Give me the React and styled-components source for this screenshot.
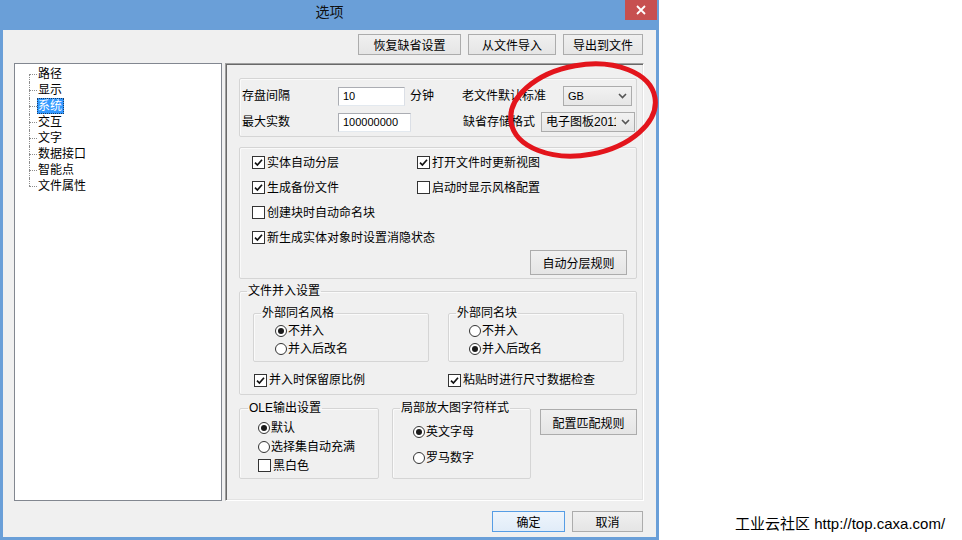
import React from 'react';
import styled, { createGlobalStyle } from 'styled-components';

const font = `"Liberation Sans", "Noto Sans CJK SC", sans-serif`;

const GlobalStyle = createGlobalStyle`
  html, body { margin: 0; padding: 0; background: #fff; }
  body { font-family: ${font}; font-size: 12px; color: #000; }
`;

const Page = styled.div`
  position: relative;
  width: 962px;
  height: 540px;
  display: flex;
  align-items: flex-end;
  overflow: hidden;
`;

const Window = styled.div`
  width: 659px;
  height: 540px;
  box-sizing: border-box;
  background: #6a9fd8;
  padding: 0 3px 3px 3px;
  display: flex;
  flex-direction: column;
  flex-shrink: 0;
`;

const TitleBar = styled.div`
  height: 30px;
  margin: 0 -3px;
  display: grid;
  grid-template-columns: 1fr auto 1fr;
  align-items: start;
`;

const Title = styled.div`
  grid-column: 2;
  font-size: 14px;
  line-height: 16px;
  padding-top: 4px;
  color: #111;
`;

const CloseBtn = styled.div`
  grid-column: 3;
  justify-self: end;
  width: 32px;
  height: 20px;
  margin-right: 2px;
  background: #c75050;
  display: flex;
  align-items: center;
  justify-content: center;
`;

const Client = styled.div`
  flex: 1;
  background: #f0f0f0;
  display: flex;
  flex-direction: column;
`;

const TopBar = styled.div`
  height: 33px;
  box-sizing: border-box;
  padding: 4px 13px 0 0;
  display: flex;
  justify-content: flex-end;
  gap: 7px;
`;

const Button = styled.button`
  width: ${p => p.w}px;
  height: ${p => p.h || 21}px;
  box-sizing: border-box;
  padding: 0;
  margin: ${p => p.m || 0};
  border: 1px solid ${p => (p.primary ? '#569de5' : '#acacac')};
  background: ${p => (p.primary ? 'linear-gradient(#eef5fc, #e1ecf8)' : 'linear-gradient(#f0f0f0, #e5e5e5)')};
  font: 12px ${font};
  color: #000;
  flex-shrink: 0;
`;

const Main = styled.div`
  height: 438px;
  display: flex;
  padding-left: 11px;
  gap: 3px;
`;

const Tree = styled.div`
  width: 208px;
  box-sizing: border-box;
  border: 1px solid #828790;
  background: #fff;
  padding: 2px 0 0 14px;
`;

const TreeItem = styled.div`
  position: relative;
  height: 16px;
  line-height: 16px;
  padding-left: 8px;
  &::before {
    content: '';
    position: absolute;
    left: 0;
    top: 8px;
    width: 8px;
    border-top: 1px dotted #8c8c8c;
  }
  &::after {
    content: '';
    position: absolute;
    left: 0;
    top: ${p => (p.first ? 8 : 0)}px;
    height: ${p => (p.first || p.last ? 8 : 16)}px;
    border-left: 1px dotted #8c8c8c;
  }
`;

const TreeLabel = styled.span`
  display: inline-block;
  padding: 0 2px 0 1px;
  height: 16px;
  box-sizing: border-box;
  background: ${p => (p.selected ? '#3399ff' : 'transparent')};
  color: ${p => (p.selected ? '#fff' : '#000')};
  outline: ${p => (p.selected ? '1px dotted #1a3d66' : 'none')};
  outline-offset: -1px;
`;

const Panel = styled.div`
  width: 419px;
  box-sizing: border-box;
  border-top: 1px solid #a0a0a0;
  border-left: 1px solid #a0a0a0;
  border-right: 1px solid #fff;
  border-bottom: 1px solid #fff;
  box-shadow: inset 1px 1px 0 #696969, inset -1px -1px 0 #e3e3e3;
  padding: 14px 5px 0 13px;
`;

const Group = styled.fieldset`
  margin: ${p => p.m || 0};
  padding: ${p => p.pad || 0};
  width: ${p => p.w}px;
  box-sizing: border-box;
  min-width: 0;
  border: 1px solid #d5d5d5;
  border-radius: 2px;
  box-shadow: inset 1px 1px 0 #fafafa;
`;

const Legend = styled.legend`
  padding: 0 1px;
  font-size: 12px;
  line-height: 16px;
`;

const FieldRow = styled.div`
  display: flex;
  align-items: center;
  height: 20px;
  margin-top: ${p => p.mt || 0}px;
`;

const Cell = styled.span`
  width: ${p => p.w}px;
  flex-shrink: 0;
  padding-left: ${p => p.pl || 0}px;
  box-sizing: border-box;
  line-height: 16px;
  white-space: nowrap;
`;

const Input = styled.div`
  width: ${p => p.w}px;
  height: 19px;
  flex-shrink: 0;
  box-sizing: border-box;
  border: 1px solid #abadb3;
  border-right-color: #dbdfe6;
  border-bottom-color: #e3e9ef;
  background: #fff;
  padding-left: 4px;
  font: 11px ${font};
  line-height: 17px;
`;

const Select = styled.div`
  width: ${p => p.w}px;
  height: 20px;
  flex-shrink: 0;
  box-sizing: border-box;
  border: 1px solid #acacac;
  background: linear-gradient(#f2f2f2, #e6e6e6);
  display: flex;
  align-items: center;
  padding: 0 4px 0 4px;
`;

const SelectValue = styled.span`
  flex: 1;
  overflow: hidden;
  white-space: nowrap;
  font-size: ${p => (p.small ? 11 : 12)}px;
  line-height: 16px;
`;

const ArrowBox = styled.span`
  width: 14px;
  display: flex;
  justify-content: flex-end;
  flex-shrink: 0;
`;

const CheckGrid = styled.div`
  display: grid;
  grid-template-columns: ${p => p.cols};
  grid-auto-rows: ${p => p.rh}px;
  align-items: center;
  margin: ${p => p.m || 0};
`;

const OptionLine = styled.label`
  display: flex;
  align-items: center;
  white-space: nowrap;
  line-height: 16px;
`;

const Box = styled.span`
  width: 13px;
  height: 13px;
  box-sizing: border-box;
  border: 1px solid #333;
  background: #fff;
  display: inline-flex;
  align-items: center;
  justify-content: center;
  margin-right: 2px;
  flex-shrink: 0;
`;

const Ring = styled.span`
  width: 12px;
  height: 12px;
  box-sizing: border-box;
  border: 1px solid #333;
  border-radius: 50%;
  background: #fff;
  display: inline-flex;
  align-items: center;
  justify-content: center;
  margin-right: 1px;
  flex-shrink: 0;
  &::after {
    content: '';
    width: 6px;
    height: 6px;
    border-radius: 50%;
    background: ${p => (p.on ? '#1a1a1a' : 'transparent')};
  }
`;

const ButtonRow = styled.div`
  display: flex;
  justify-content: flex-end;
  padding-right: 9px;
`;

const SubRow = styled.div`
  display: flex;
  gap: ${p => p.gap || 0}px;
  margin: ${p => p.m || 0};
`;

const LowerRow = styled.div`
  display: flex;
  align-items: stretch;
  margin-top: 5px;
`;

const BottomBar = styled.div`
  height: 36px;
  box-sizing: border-box;
  padding: 10px 13px 0 0;
  display: flex;
  justify-content: flex-end;
  gap: 7px;
`;

const Footer = styled.div`
  margin: 0 0 7px 76px;
  font-size: 15px;
  line-height: 18px;
  white-space: nowrap;
`;

const Mark = styled.svg`
  position: absolute;
  left: 0;
  top: 0;
  pointer-events: none;
`;

const Check = ({ on, children }) => (
  <OptionLine>
    <Box>
      {on && (
        <svg width="9" height="9" viewBox="0 0 9 9">
          <path d="M1 4.6 L3.4 7 L8 1.8" fill="none" stroke="#111" strokeWidth="1.7" />
        </svg>
      )}
    </Box>
    {children}
  </OptionLine>
);

const Radio = ({ on, children }) => (
  <OptionLine>
    <Ring on={on} />
    {children}
  </OptionLine>
);

const Arrow = () => (
  <ArrowBox>
    <svg width="9" height="6" viewBox="0 0 9 6">
      <path d="M1 1 L4.5 4.5 L8 1" fill="none" stroke="#555" strokeWidth="1.6" />
    </svg>
  </ArrowBox>
);

const treeItems = ['路径', '显示', '系统', '交互', '文字', '数据接口', '智能点', '文件属性'];

export default function App() {
  return (
    <Page>
      <GlobalStyle />
      <Window>
        <TitleBar>
          <Title>选项</Title>
          <CloseBtn>
            <svg width="10" height="10" viewBox="0 0 10 10">
              <path d="M1 1 L9 9 M9 1 L1 9" stroke="#fff" strokeWidth="1.8" />
            </svg>
          </CloseBtn>
        </TitleBar>
        <Client>
          <TopBar>
            <Button w={103}>恢复缺省设置</Button>
            <Button w={88}>从文件导入</Button>
            <Button w={80}>导出到文件</Button>
          </TopBar>
          <Main>
            <Tree>
              {treeItems.map((t, i) => (
                <TreeItem key={t} first={i === 0} last={i === treeItems.length - 1}>
                  <TreeLabel selected={t === '系统'}>{t}</TreeLabel>
                </TreeItem>
              ))}
            </Tree>
            <Panel>
              <Group w={398} pad="7px 0 4px 2px">
                <FieldRow>
                  <Cell w={96}>存盘间隔</Cell>
                  <Input w={67}>10</Input>
                  <Cell w={57} pl={5}>分钟</Cell>
                  <Cell w={101}>老文件默认标准</Cell>
                  <Select w={69}>
                    <SelectValue small>GB</SelectValue>
                    <Arrow />
                  </Select>
                </FieldRow>
                <FieldRow mt={6}>
                  <Cell w={96}>最大实数</Cell>
                  <Input w={73}>100000000</Input>
                  <Cell w={52} />
                  <Cell w={78}>缺省存储格式</Cell>
                  <Select w={94}>
                    <SelectValue>电子图板2011</SelectValue>
                    <Arrow />
                  </Select>
                </FieldRow>
              </Group>

              <Group w={398} m="10px 0 0 0" pad="2px 0 3px 12px">
                <CheckGrid cols="165px 1fr" rh={25}>
                  <Check on>实体自动分层</Check>
                  <Check on>打开文件时更新视图</Check>
                  <Check on>生成备份文件</Check>
                  <Check>启动时显示风格配置</Check>
                  <Check>创建块时自动命名块</Check>
                  <span />
                  <Check on>新生成实体对象时设置消隐状态</Check>
                  <span />
                </CheckGrid>
                <ButtonRow>
                  <Button w={97} h={25}>自动分层规则</Button>
                </ButtonRow>
              </Group>

              <Group w={398} m="4px 0 0 0" pad="0 0 5px 7px">
                <Legend>文件并入设置</Legend>
                <SubRow gap={19} m="6px 0 0 6px">
                  <Group w={176} pad="1px 0 3px 7px">
                    <Legend>外部同名风格</Legend>
                    <CheckGrid cols="1fr" rh={18} m="0 0 0 14px">
                      <Radio on>不并入</Radio>
                      <Radio>并入后改名</Radio>
                    </CheckGrid>
                  </Group>
                  <Group w={176} pad="1px 0 3px 7px">
                    <Legend>外部同名块</Legend>
                    <CheckGrid cols="1fr" rh={18} m="0 0 0 13px">
                      <Radio>不并入</Radio>
                      <Radio on>并入后改名</Radio>
                    </CheckGrid>
                  </Group>
                </SubRow>
                <CheckGrid cols="194px 1fr" rh={18} m="9px 0 0 7px">
                  <Check on>并入时保留原比例</Check>
                  <Check on>粘贴时进行尺寸数据检查</Check>
                </CheckGrid>
              </Group>

              <LowerRow>
                <Group w={140} pad="0 0 3px 8px">
                  <Legend>OLE输出设置</Legend>
                  <CheckGrid cols="1fr" rh={19} m="2px 0 0 10px">
                    <Radio on>默认</Radio>
                    <Radio>选择集自动充满</Radio>
                    <Check>黑白色</Check>
                  </CheckGrid>
                </Group>
                <Group w={139} m="0 0 0 13px" pad="0 0 7px 7px">
                  <Legend>局部放大图字符样式</Legend>
                  <CheckGrid cols="1fr" rh={26} m="3px 0 0 13px">
                    <Radio on>英文字母</Radio>
                    <Radio>罗马数字</Radio>
                  </CheckGrid>
                </Group>
                <Button w={97} h={26} m="9px 0 0 9px">配置匹配规则</Button>
              </LowerRow>
            </Panel>
          </Main>
          <BottomBar>
            <Button w={73} primary>确定</Button>
            <Button w={71}>取消</Button>
          </BottomBar>
        </Client>
      </Window>
      <Footer>工业云社区 http://top.caxa.com/</Footer>
      <Mark width="962" height="540" viewBox="0 0 962 540">
        <ellipse
          cx="583"
          cy="110"
          rx="73"
          ry="45"
          transform="rotate(-10 583 110)"
          fill="none"
          stroke="#e3151c"
          strokeWidth="5"
        />
      </Mark>
    </Page>
  );
}
